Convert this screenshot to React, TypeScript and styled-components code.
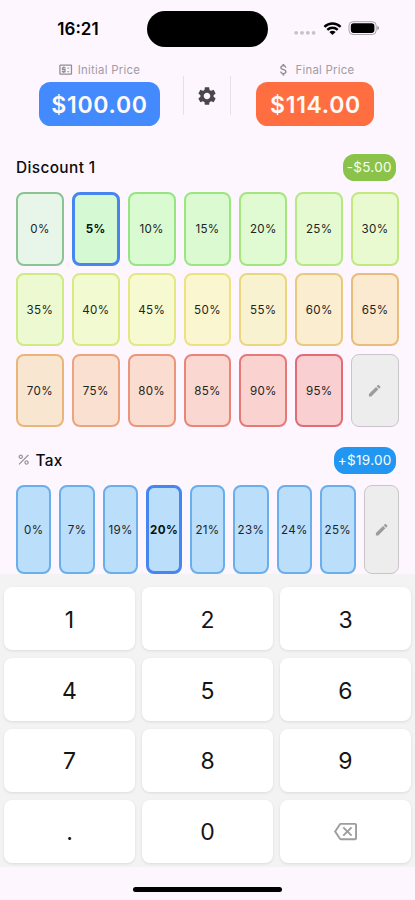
import React from "react";
import styled, { createGlobalStyle } from "styled-components";
import {
  MdAttachMoney,
  MdEdit,
  MdOutlineBackspace,
  MdOutlinePriceChange,
  MdPercent,
  MdSettings,
} from "react-icons/md";

const GlobalStyle = createGlobalStyle`
  * { box-sizing: border-box; }
  body { margin: 0; background: #fdf6fe; }
  button { border: 0; padding: 0; font: inherit; color: inherit; }
`;

const Screen = styled.div`
  width: 415px;
  height: 900px;
  overflow: hidden;
  background: #fdf6fe;
  display: flex;
  flex-direction: column;
  font-family: Inter, "Noto Sans", sans-serif;
  color: #1b1a1d;
`;

const StatusBar = styled.header`
  height: 58px;
  flex: none;
  display: grid;
  grid-template-columns: 147px 121px 147px;
  padding-top: 11px;
`;

const Clock = styled.div`
  height: 36px;
  line-height: 36px;
  padding-left: 9px;
  text-align: center;
  font-size: 17px;
  font-weight: 600;
  letter-spacing: 0;
  color: #000;
`;

const Island = styled.div`
  height: 36px;
  border-radius: 18px;
  background: #000;
`;

const StatusIcons = styled.div`
  height: 34px;
  padding-left: 26px;
  display: flex;
  align-items: center;
`;

const Prices = styled.section`
  height: 77px;
  flex: none;
  display: flex;
  padding: 4px 15px 0 15px;
`;

const PriceColumn = styled.div`
  width: 168px;
  flex: none;
  display: flex;
  flex-direction: column;
  align-items: center;
`;

const PriceLabel = styled.div<{ $gap: number }>`
  height: 20px;
  padding-bottom: 4px;
  display: flex;
  align-items: center;
  gap: ${(p) => p.$gap}px;
  font-size: 11.4px;
  letter-spacing: 0.25px;
  color: #a19ca3;
  white-space: nowrap;
  svg { color: #918d93; }
`;

const PriceBox = styled.div<{ $color: string; $width: number }>`
  width: ${(p) => p.$width}px;
  height: 44px;
  border-radius: 11.5px;
  background: ${(p) => p.$color};
  color: #fffaf7;
  display: flex;
  align-items: center;
  justify-content: center;
  font-size: 23px;
  font-weight: 600;
  letter-spacing: 0.7px;
  padding: 2px 0 0 1px;
`;

const SettingsButton = styled.button`
  width: 48px;
  flex: none;
  height: 39px;
  margin-top: 14px;
  border-left: 1px solid #e6e0e8;
  border-right: 1px solid #e6e0e8;
  background: none;
  display: flex;
  align-items: center;
  justify-content: center;
  color: #49464c;
`;

const SectionHead = styled.div<{ $height: number }>`
  height: ${(p) => p.$height}px;
  flex: none;
  padding: 7.4px 19.5px 0 16px;
  display: flex;
  align-items: center;
  justify-content: space-between;
`;

const Title = styled.h2`
  margin: 0;
  display: flex;
  align-items: center;
  gap: 4px;
  font-size: 15.4px;
  font-weight: 500;
  letter-spacing: 0.38px;
  color: #0c0b0d;
  svg { color: #99959b; }
`;

const Badge = styled.span<{ $color: string; $width: number }>`
  width: ${(p) => p.$width}px;
  height: 27px;
  border-radius: 11.5px;
  background: ${(p) => p.$color};
  color: #f8fff5;
  display: flex;
  align-items: center;
  justify-content: center;
  font-size: 13.5px;
  letter-spacing: 0.3px;
`;

const RateGrid = styled.div<{ $columns: number; $rowHeight: number }>`
  flex: none;
  padding: 0 16px;
  display: grid;
  grid-template-columns: repeat(${(p) => p.$columns}, minmax(0, 1fr));
  grid-auto-rows: ${(p) => p.$rowHeight}px;
  gap: 7.7px 8px;
`;

const Rate = styled.button<{ $fill: string; $line: string; $selected?: boolean }>`
  border: ${(p) => (p.$selected ? 3 : 2)}px solid ${(p) => (p.$selected ? "#4686ee" : p.$line)};
  border-radius: 8px;
  background: ${(p) => p.$fill};
  display: flex;
  align-items: center;
  justify-content: center;
  font-size: 11.6px;
  font-weight: ${(p) => (p.$selected ? 700 : 400)};
  letter-spacing: 0.35px;
  white-space: nowrap;
  padding-top: 1px;
  color: ${(p) => (p.$selected ? "#07120b" : "#20251f")};
`;

const EditRate = styled.button`
  border: 1px solid #c9c5ca;
  border-radius: 8px;
  background: #eeeded;
  display: flex;
  align-items: center;
  justify-content: center;
  color: #9d9b9d;
`;

const Keypad = styled.section`
  height: 293px;
  flex: none;
  padding: 13.3px 4px 0;
  background: #f4f3f4;
  display: grid;
  grid-template-columns: repeat(3, 1fr);
  grid-auto-rows: 63.2px;
  gap: 7.6px 7px;
`;

const Key = styled.button`
  border-radius: 8px;
  background: #fff;
  box-shadow: 0 1px 3px rgba(0, 0, 0, 0.1);
  display: flex;
  align-items: center;
  justify-content: center;
  font-size: 23px;
  font-weight: 400;
  padding-top: 2px;
  color: #151515;
  svg { color: #9d9d9d; margin-top: -2px; }
`;

const HomeArea = styled.footer`
  flex: 1;
  display: flex;
  justify-content: center;
  padding-top: 20px;
`;

const HomeIndicator = styled.div`
  width: 149px;
  height: 5px;
  border-radius: 3px;
  background: #000;
`;

const discounts = [
  ["0%", "#e8f5e9", "#8bc493"],
  ["5%", "#d4f9d3", "#4686ee"],
  ["10%", "#dafad2", "#96e583"],
  ["15%", "#dcfad1", "#9ce681"],
  ["20%", "#e0fad1", "#a4e57f"],
  ["25%", "#e6fad1", "#b5e981"],
  ["30%", "#eafad0", "#c1e97e"],
  ["35%", "#edfad1", "#cdea83"],
  ["40%", "#f2fad1", "#d9ea83"],
  ["45%", "#f7fad1", "#e4e880"],
  ["50%", "#faf7d0", "#eee17f"],
  ["55%", "#f9f2d1", "#ead77d"],
  ["60%", "#faedd0", "#e9c97d"],
  ["65%", "#fbe9d0", "#e8bd7c"],
  ["70%", "#f9e6d0", "#ebb47a"],
  ["75%", "#f9e0d0", "#eba47c"],
  ["80%", "#fadcd1", "#e9967b"],
  ["85%", "#fad7d1", "#e7857a"],
  ["90%", "#fad3d1", "#e47978"],
  ["95%", "#facfd1", "#e06d75"],
];

const taxes = ["0%", "7%", "19%", "20%", "21%", "23%", "24%", "25%"];
const digits = ["1", "2", "3", "4", "5", "6", "7", "8", "9", ".", "0"];

function DeviceStatus() {
  return (
    <svg width="88" height="16" viewBox="0 0 88 16" fill="none">
      {[2.2, 8, 13.8, 19.6].map((x) => (
        <circle key={x} cx={x} cy="12.8" r="1.9" fill="#c7c0c9" />
      ))}
      <g transform="translate(29 1.7)">
        <path d="M1.4 5.1C6.2.7 12.8.7 17.6 5.1" stroke="#000" strokeWidth="2.5" />
        <path d="M4.3 8.1C7.2 5.4 11.8 5.4 14.7 8.1" stroke="#000" strokeWidth="2.4" />
        <path d="M6.4 10.2Q9.5 7.8 12.6 10.2L9.5 13.3Z" fill="#000" />
      </g>
      <rect x="55" y="1.7" width="27.2" height="12.8" rx="4" stroke="#aaa3ac" />
      <rect x="56.8" y="3.3" width="23.6" height="9.6" rx="2.8" fill="#000" />
      <path d="M83.4 6Q85 6.5 85 8.1T83.4 10.3Z" fill="#8e8890" />
    </svg>
  );
}

export default function App() {
  return (
    <Screen>
      <GlobalStyle />
      <StatusBar>
        <Clock>16:21</Clock>
        <Island />
        <StatusIcons><DeviceStatus /></StatusIcons>
      </StatusBar>
      <Prices>
        <PriceColumn>
          <PriceLabel $gap={4.5}><MdOutlinePriceChange size={15.4} />Initial Price</PriceLabel>
          <PriceBox $color="#448aff" $width={121}>$100.00</PriceBox>
        </PriceColumn>
        <SettingsButton aria-label="Settings"><MdSettings size={22} /></SettingsButton>
        <PriceColumn>
          <PriceLabel $gap={4.5}><MdAttachMoney size={15.4} />Final Price</PriceLabel>
          <PriceBox $color="#ff6e40" $width={118.5}>$114.00</PriceBox>
        </PriceColumn>
      </Prices>
      <SectionHead $height={57.4}>
        <Title>Discount 1</Title>
        <Badge $color="#8bc34a" $width={52.5}>-$5.00</Badge>
      </SectionHead>
      <RateGrid $columns={7} $rowHeight={73.2}>
        {discounts.map(([label, fill, line]) => (
          <Rate key={label} $fill={fill} $line={line} $selected={label === "5%"}>{label}</Rate>
        ))}
        <EditRate aria-label="Edit discounts"><MdEdit size={15.4} /></EditRate>
      </RateGrid>
      <SectionHead $height={58}>
        <Title><MdPercent size={15.4} />Tax</Title>
        <Badge $color="#2196f3" $width={61.5}>+$19.00</Badge>
      </SectionHead>
      <RateGrid $columns={9} $rowHeight={88.6}>
        {taxes.map((label) => (
          <Rate key={label} $fill="#bbdefb" $line="#6aaeeb" $selected={label === "20%"}>{label}</Rate>
        ))}
        <EditRate aria-label="Edit taxes"><MdEdit size={15.4} /></EditRate>
      </RateGrid>
      <Keypad>
        {digits.map((digit) => <Key key={digit}>{digit}</Key>)}
        <Key aria-label="Delete"><MdOutlineBackspace size={23} /></Key>
      </Keypad>
      <HomeArea><HomeIndicator /></HomeArea>
    </Screen>
  );
}
